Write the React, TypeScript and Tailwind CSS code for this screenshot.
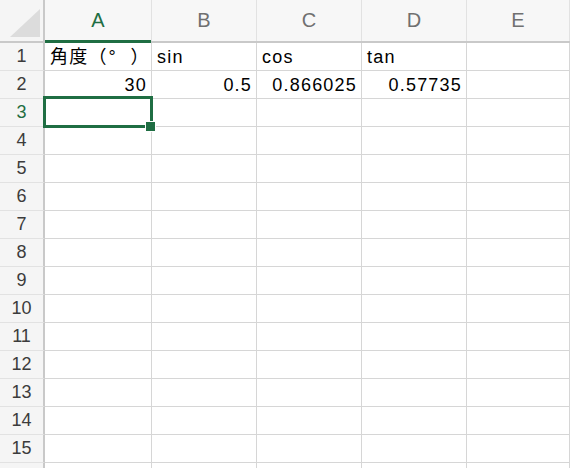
import React from 'react';

const cols = ['A', 'B', 'C', 'D', 'E'];
const colWidths = ['w-[107px]', 'w-[105px]', 'w-[105px]', 'w-[105px]', 'flex-1'];

type Cell = { v: React.ReactNode; num?: boolean };

// CJK-style full-width degree mark
const Degree = () => <span className="inline-block w-[23px] text-left pl-[1px]">°</span>;

const data: Record<number, Cell[]> = {
  1: [
    { v: <>角度（<Degree />）</> },
    { v: 'sin' },
    { v: 'cos' },
    { v: 'tan' },
    { v: '' },
  ],
  2: [
    { v: '30', num: true },
    { v: '0.5', num: true },
    { v: '0.866025', num: true },
    { v: '0.57735', num: true },
    { v: '' },
  ],
};

const font = { fontFamily: '"Liberation Sans", "Noto Sans CJK JP", sans-serif' };

const Corner: React.FC = () => (
  <div className="w-[45px] h-full shrink-0 border-r-2 border-[#c9c9c9] bg-[#f5f5f5] relative">
    <svg className="absolute left-[10px] top-[9px]" width="30" height="28" viewBox="0 0 30 28">
      <polygon points="30,0 30,28 0,28" fill="#dcdcdc" />
    </svg>
  </div>
);

const App: React.FC = () => {
  return (
    <div className="w-[570px] h-[468px] bg-white overflow-hidden select-none" style={font}>
      {/* column headers */}
      <div className="flex h-[43px] border-b-2 border-[#c9c9c9] bg-[#f7f7f7]">
        <Corner />
        {cols.map((c, i) => (
          <div
            key={c}
            className={`${colWidths[i]} shrink-0 relative flex items-center justify-center border-r border-[#e2e2e2] text-[20px] ${
              i === 0 ? 'text-[#1f6e43]' : 'text-[#707070]'
            }`}
          >
            <span className="-mt-[1px]">{c}</span>
            {i === 0 && <div className="absolute left-0 right-0 -bottom-[2px] h-[3px] bg-[#1f6e43]" />}
          </div>
        ))}
      </div>

      {/* rows */}
      {Array.from({ length: 16 }, (_, r) => r + 1).map((row) => {
        const cells = data[row] ?? cols.map(() => ({ v: '' }));
        return (
          <div key={row} className="flex h-[28px]">
            <div
              className={`w-[45px] shrink-0 border-r-2 border-b border-r-[#c9c9c9] border-b-[#e2e2e2] bg-[#f5f5f5] flex items-center justify-center text-[18px] ${
                row === 3 ? 'text-[#1f6e43]' : 'text-[#3c3c3c]'
              }`}
            >
              {row <= 15 ? row : ''}
            </div>
            {cells.map((cell, i) => (
              <div
                key={i}
                className={`${colWidths[i]} shrink-0 relative flex items-center border-r border-b border-[#d6d6d6] text-[18px] tracking-[1.2px] text-black pl-[5px] pr-[4px] ${
                  cell.num ? 'justify-end' : 'justify-start'
                }`}
              >
                <span className="whitespace-nowrap pt-[2px]">{cell.v}</span>
                {row === 3 && i === 0 && (
                  <>
                    <div className="absolute z-10 -left-[2px] -top-[3px] w-[110px] h-[32px] border-[3px] border-[#1f6e43]" />
                    <div className="absolute z-20 left-[100px] top-[22px] w-[11px] h-[11px] bg-[#1f6e43] border border-white" />
                  </>
                )}
              </div>
            ))}
          </div>
        );
      })}
    </div>
  );
};

export default App;
